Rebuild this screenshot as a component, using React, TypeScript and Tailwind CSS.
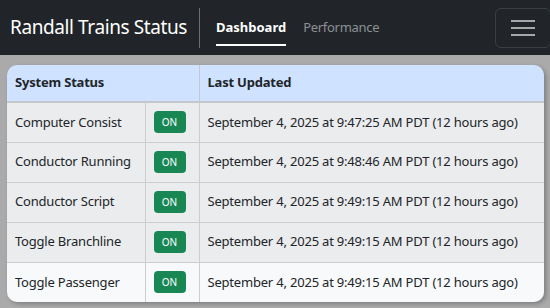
import React from "react";

const rows = [
  { name: "Computer Consist", time: "September 4, 2025 at 9:47:25 AM PDT (12 hours ago)" },
  { name: "Conductor Running", time: "September 4, 2025 at 9:48:46 AM PDT (12 hours ago)" },
  { name: "Conductor Script", time: "September 4, 2025 at 9:49:15 AM PDT (12 hours ago)" },
  { name: "Toggle Branchline", time: "September 4, 2025 at 9:49:15 AM PDT (12 hours ago)" },
  { name: "Toggle Passenger", time: "September 4, 2025 at 9:49:15 AM PDT (12 hours ago)" },
];

export default function App() {
  return (
    <div className="w-[550px] h-[308px] overflow-hidden bg-[#aaaaaa] font-['Noto_Sans',sans-serif]">
      <nav className="h-[55px] bg-[#212529] flex items-center pl-[10px]">
        <span className="text-white text-[19px] tracking-[-0.4px] leading-none pr-[12px]">Randall Trains Status</span>
        <div className="w-px h-[40px] bg-[#6c6f72]" />
        <div className="flex h-full items-center ml-[16px] gap-[17px]">
          <div className="relative h-full flex items-center">
            <span className="text-white font-bold text-[13px]">Dashboard</span>
            <div className="absolute left-0 right-0 bottom-[9px] h-[2px] bg-white" />
          </div>
          <span className="text-[#8d9093] text-[13px] tracking-[-0.3px]">Performance</span>
        </div>
        <div className="ml-auto mr-[-1px] w-[56px] h-[40px] rounded-[6px] border border-[#3a3e42] flex flex-col items-center justify-center gap-[5px]">
          <div className="w-[24px] h-[2px] bg-[#a5a7a9]" />
          <div className="w-[24px] h-[2px] bg-[#a5a7a9]" />
          <div className="w-[24px] h-[2px] bg-[#a5a7a9]" />
        </div>
      </nav>
      <div className="pt-[10px] pl-[7px] pr-[6px]">
        <div className="rounded-[10px] overflow-hidden shadow-[2px_2px_4px_rgba(0,0,0,0.25)]">
          <table className="w-full border-collapse text-[13px] tracking-[-0.2px] text-[#212529]">
            <thead>
              <tr className="bg-[#cfe2ff] h-[37px]">
                <th colSpan={2} className="text-left font-bold pl-[8px] border-r border-b-2 border-[#c4c8cc]">System Status</th>
                <th className="text-left font-bold pl-[8px] border-b-2 border-[#c4c8cc]">Last Updated</th>
              </tr>
            </thead>
            <tbody>
              {rows.map((r, i) => (
                <tr key={r.name} className={`h-[40px] ${i === rows.length - 1 ? "bg-[#f8f9fa]" : "bg-[#ebecee] border-b border-[#cbcdcf]"}`}>
                  <td className="pl-[8px] w-[138px] border-r border-[#cbcdcf]">{r.name}</td>
                  <td className="w-[54px] border-r border-[#cbcdcf]">
                    <div className="ml-[8px] w-[32px] h-[22px] rounded-[4px] bg-[#198754] text-white text-[10px] tracking-normal flex items-center justify-center">ON</div>
                  </td>
                  <td className="pl-[8px]">{r.time}</td>
                </tr>
              ))}
            </tbody>
          </table>
        </div>
      </div>
    </div>
  );
}
